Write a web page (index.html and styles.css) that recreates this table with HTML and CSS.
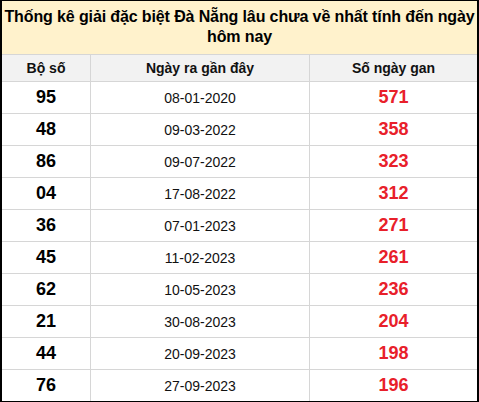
FILE: index.html
```html
<!DOCTYPE html>
<html>
<head>
<meta charset="utf-8">
<link rel="stylesheet" href="styles.css">
</head>
<body>
<div class="box">
  <div class="title">Thống kê giải đặc biệt Đà Nẵng lâu chưa về nhất tính đến ngày hôm nay</div>
  <div class="grid">
    <div class="h">Bộ số</div><div class="h">Ngày ra gần đây</div><div class="h">Số ngày gan</div>
    <div class="n">95</div><div class="d">08-01-2020</div><div class="g">571</div>
    <div class="n">48</div><div class="d">09-03-2022</div><div class="g">358</div>
    <div class="n">86</div><div class="d">09-07-2022</div><div class="g">323</div>
    <div class="n">04</div><div class="d">17-08-2022</div><div class="g">312</div>
    <div class="n">36</div><div class="d">07-01-2023</div><div class="g">271</div>
    <div class="n">45</div><div class="d">11-02-2023</div><div class="g">261</div>
    <div class="n">62</div><div class="d">10-05-2023</div><div class="g">236</div>
    <div class="n">21</div><div class="d">30-08-2023</div><div class="g">204</div>
    <div class="n">44</div><div class="d">20-09-2023</div><div class="g">198</div>
    <div class="n">76</div><div class="d">27-09-2023</div><div class="g">196</div>
  </div>
</div>
</body>
</html>
```
FILE: styles.css
```css
html, body { margin: 0; padding: 0; background: #fff; }
body { font-family: "Liberation Sans", Arial, sans-serif; }
.box {
  width: 479px;
  height: 402px;
  box-sizing: border-box;
  border: 1px solid #000;
  border-left-width: 2px;
  border-right-width: 2px;
  overflow: hidden;
}
.title {
  background: #fff2cc;
  height: 54px;
  box-sizing: border-box;
  padding: 6px 0 0 0;
  text-align: center;
  font-weight: bold;
  font-size: 16px;
  letter-spacing: -0.12px;
  line-height: 20px;
  color: #000;
  border-bottom: 1px solid #d6d6d6;
}
.grid {
  display: grid;
  grid-template-columns: 89px 219px 1fr;
  grid-template-rows: 27px repeat(9, 32px) 31px;
}
.grid > div {
  display: flex;
  align-items: center;
  justify-content: center;
  border-bottom: 1px solid #d6d6d6;
  border-right: 1px solid #d6d6d6;
}
.grid > div:nth-child(3n) { border-right: none; }
.grid > div:nth-last-child(-n+3) { border-bottom: none; }
.h {
  background: #f2f2f2;
  font-weight: bold;
  font-size: 14px;
  color: #111;
}
.n { font-weight: bold; font-size: 18px; color: #000; }
.d { font-size: 14px; color: #111; }
.g { font-weight: bold; font-size: 18px; color: #e8202a; }
```
